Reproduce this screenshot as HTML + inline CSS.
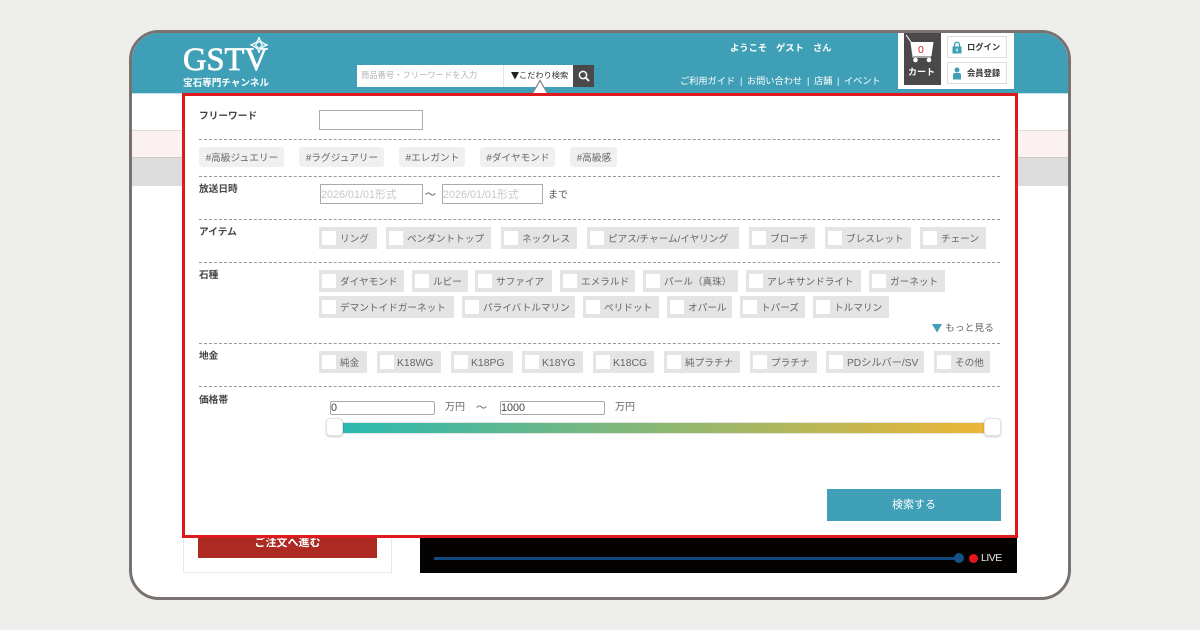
<!DOCTYPE html>
<html lang="ja"><head><meta charset="utf-8"><title>GSTV</title>
<style>
*{box-sizing:border-box;margin:0;padding:0}
html,body{width:1200px;height:630px;overflow:hidden;background:#eeeeec;font-family:"Liberation Sans","Noto Sans CJK JP",sans-serif}
#frame{position:absolute;left:129px;top:30px;width:942px;height:570px;border:3px solid #7a7270;border-radius:30px;background:#fff;overflow:hidden}
.a{position:absolute;white-space:nowrap}
.l{font-size:9.7px;font-weight:700;color:#444;line-height:14px}
.d{position:absolute;left:199px;width:801px;height:0;border-top:1px dashed #999}
.t{position:absolute;height:20px;top:147px;background:#f0f0f0;border-radius:3px;font-size:9.7px;color:#666;line-height:23px;text-align:center;white-space:nowrap;padding-left:1px}
.c{position:absolute;height:22px;background:#e4e4e4;font-size:9.65px;color:#666;line-height:26px;padding-left:21px;white-space:nowrap}
.c:before{content:"";position:absolute;left:3px;top:4px;width:14px;height:14px;background:#fff}
.k{font-size:10.4px;padding-left:20px}
.i{position:absolute;border:1px solid #aaa;background:#fff;font-size:10.8px;color:#c8c8c8;white-space:nowrap;padding-left:0}
.w{color:#fff}
.n{font-size:9.2px;line-height:14px;top:74px}
</style></head><body>
<div id="frame"></div>
<div style="position:absolute;left:0;top:0;width:1200px;height:630px;">
<!-- clipped header -->
<div class="a" style="left:132px;top:33px;width:936px;height:60px;background:#3f9fb7;border-radius:27px 27px 0 0"></div>
<div class="a" style="left:132px;top:93px;width:936px;height:1px;background:#c5e2ea"></div>
<!-- bands -->
<div class="a" style="left:132px;top:130px;width:936px;height:27px;background:#fbf1f1;border-top:1px solid #ddd"></div>
<div class="a" style="left:132px;top:157px;width:936px;height:29px;background:#dcdcdc;border-top:1px solid #ccc"></div>
<!-- logo -->
<div class="a w" style="left:183px;top:40px;font-family:'Liberation Serif',serif;font-size:32.5px;line-height:40px;font-weight:400;-webkit-text-stroke:.75px #fff">GSTV</div>
<svg class="a" style="left:249px;top:36px" width="20" height="20" viewBox="0 0 20 20"><path d="M10 1 C10.700 5 12 6.500 18 9 C12 11.500 10.700 13 10 17 C9.300 13 8 11.500 2 9 C8 6.500 9.300 5 10 1Z" fill="#3f9fb7" stroke="#fff" stroke-width="1.300"/><path d="M10 5.400 L13.600 9 L10 12.600 L6.400 9Z" fill="#3f9fb7" stroke="#fff" stroke-width="1.100"/></svg>
<div class="a w" style="left:183px;top:77px;font-size:9.600px;font-weight:700;line-height:13px">宝石専門チャンネル</div>
<!-- search -->
<div class="a" style="left:357px;top:65px;width:216px;height:22px;background:#fff"></div>
<div class="a" style="left:503px;top:65px;width:1px;height:22px;background:#e4e4e4"></div>
<div class="a" style="left:361px;top:69px;font-size:8.300px;color:#b5b5b5;line-height:13px">商品番号・フリーワードを入力</div>
<svg class="a" style="left:511px;top:72px" width="8" height="8" viewBox="0 0 8 8"><path d="M0 0 H8 L4 7.500Z" fill="#222"/></svg>
<div class="a" style="left:519px;top:69px;font-size:8.200px;color:#333;line-height:13px">こだわり検索</div>
<div class="a" style="left:573px;top:65px;width:21px;height:22px;background:#4a4848"></div>
<svg class="a" style="left:577px;top:69px" width="14" height="14" viewBox="0 0 14 14"><circle cx="6" cy="6" r="3.600" fill="none" stroke="#fff" stroke-width="1.500"/><path d="M8.700 8.700 L12 12" stroke="#fff" stroke-width="1.800"/></svg>
<svg class="a" style="left:530px;top:79px" width="20" height="16" viewBox="0 0 20 16"><path d="M1.500 16 L10 1.500 L18.500 16Z" fill="#fff" stroke="#8a8a8a" stroke-width="1.300"/></svg>
<!-- nav -->
<div class="a w" style="left:730px;top:41px;font-size:9.300px;font-weight:700;line-height:14px">ようこそ</div>
<div class="a w" style="left:776px;top:41px;font-size:9.300px;font-weight:700;line-height:14px">ゲスト</div>
<div class="a w" style="left:813px;top:41px;font-size:9.300px;font-weight:700;line-height:14px">さん</div>
<div class="a w n" style="left:680px">ご利用ガイド</div>
<div class="a w n" style="left:740px">|</div>
<div class="a w n" style="left:747px">お問い合わせ</div>
<div class="a w n" style="left:807px">|</div>
<div class="a w n" style="left:814px">店舗</div>
<div class="a w n" style="left:837px">|</div>
<div class="a w n" style="left:844px">イベント</div>
<!-- cart -->
<div class="a" style="left:898px;top:33px;width:116px;height:56px;background:#fff"></div>
<div class="a" style="left:904px;top:33px;width:37px;height:52px;background:#4a4848"></div>
<svg class="a" style="left:904px;top:34px" width="37" height="30" viewBox="0 0 37 30"><path d="M2 1 L7 8 L9 23 H27" fill="none" stroke="#ddd" stroke-width="1.200"/><path d="M6.500 8 H29.500 L27.500 22 H9Z" fill="#fff"/><circle cx="11.500" cy="26" r="2.300" fill="#fff"/><circle cx="25" cy="26" r="2.300" fill="#fff"/></svg>
<div class="a" style="left:918px;top:44px;font-size:10.500px;color:#c22;line-height:13px">0</div>
<div class="a w" style="left:908px;top:65px;font-size:9px;font-weight:700;line-height:14px">カート</div>
<div class="a" style="left:947px;top:36px;width:60px;height:22px;border:1px solid #ddd;background:#fff"></div>
<div class="a" style="left:947px;top:62px;width:60px;height:22px;border:1px solid #ddd;background:#fff"></div>
<svg class="a" style="left:951px;top:41px" width="12" height="13" viewBox="0 0 12 13"><path d="M3.500 6 V3.800 A2.500 2.500 0 0 1 8.500 3.800 V6" fill="none" stroke="#3f9fb7" stroke-width="1.300"/><rect x="1.500" y="5.500" width="9" height="7" fill="#3f9fb7"/><rect x="5.300" y="7.500" width="1.400" height="3" fill="#fff"/></svg>
<svg class="a" style="left:951px;top:67px" width="12" height="13" viewBox="0 0 12 13"><circle cx="6" cy="3" r="2.500" fill="#3f9fb7"/><path d="M2 12.500 V8 Q2 6 4 6 H8 Q10 6 10 8 V12.500Z" fill="#3f9fb7"/></svg>
<div class="a" style="left:967px;top:40px;font-size:8.300px;font-weight:700;color:#333;line-height:14px">ログイン</div>
<div class="a" style="left:967px;top:66px;font-size:8.300px;font-weight:700;color:#333;line-height:14px">会員登録</div>
<!-- bottom -->
<div class="a" style="left:183px;top:530px;width:209px;height:43px;border:1px solid #e8e8e8;background:#fff"></div>
<div class="a" style="left:198px;top:530px;width:179px;height:28px;background:#ac2a22;color:#fff;font-size:11px;font-weight:700;text-align:center;line-height:24px;padding-top:1px">ご注文へ進む</div>
<div class="a" style="left:420px;top:530px;width:597px;height:43px;background:#050202"></div>
<div class="a" style="left:434px;top:557px;width:525px;height:3px;background:#134a7e"></div>
<div class="a" style="left:954px;top:553px;width:10px;height:10px;border-radius:50%;background:#14528a"></div>
<div class="a" style="left:969px;top:554px;width:9px;height:9px;border-radius:50%;background:#e8141c"></div>
<div class="a" style="left:981px;top:552px;font-size:10.500px;color:#e8e8e8;line-height:13px;letter-spacing:-.5px">LIVE</div>
<!-- modal -->
<div class="a" style="left:182px;top:93px;width:836px;height:445px;background:#fff;border:3px solid #dc1a1f;outline:0"></div>
<div class="a l" style="left:199px;top:110px">フリーワード</div>
<div class="i" style="left:319px;top:110px;width:104px;height:20px"></div>
<div class="d" style="top:139px"></div>
<div class="t" style="left:199px;width:85px">#高級ジュエリー</div>
<div class="t" style="left:299px;width:85px">#ラグジュアリー</div>
<div class="t" style="left:399px;width:66px">#エレガント</div>
<div class="t" style="left:480px;width:75px">#ダイヤモンド</div>
<div class="t" style="left:570px;width:47px">#高級感</div>
<div class="d" style="top:176px"></div>
<div class="a l" style="left:199px;top:183px">放送日時</div>
<div class="i" style="left:320px;top:184px;width:103px;height:20px;line-height:20px">2026/01/01形式</div>
<div class="a" style="left:425px;top:188px;font-size:11px;color:#555;line-height:15px">～</div>
<div class="i" style="left:442px;top:184px;width:101px;height:20px;line-height:20px">2026/01/01形式</div>
<div class="a" style="left:548px;top:189px;font-size:10px;color:#555;line-height:14px">まで</div>
<div class="d" style="top:219px"></div>
<div class="a l" style="left:199px;top:226px">アイテム</div>
<div class="c" style="left:319px;top:227px;width:58px">リング</div>
<div class="c" style="left:386px;top:227px;width:105px">ペンダントトップ</div>
<div class="c" style="left:501px;top:227px;width:76px">ネックレス</div>
<div class="c" style="left:587px;top:227px;width:152px">ピアス/チャーム/イヤリング</div>
<div class="c" style="left:749px;top:227px;width:66px">ブローチ</div>
<div class="c" style="left:825px;top:227px;width:86px">ブレスレット</div>
<div class="c" style="left:920px;top:227px;width:66px">チェーン</div>
<div class="d" style="top:262px"></div>
<div class="a l" style="left:199px;top:269px">石種</div>
<div class="c" style="left:319px;top:270px;width:85px">ダイヤモンド</div>
<div class="c" style="left:412px;top:270px;width:56px">ルビー</div>
<div class="c" style="left:475px;top:270px;width:77px">サファイア</div>
<div class="c" style="left:560px;top:270px;width:75px">エメラルド</div>
<div class="c" style="left:643px;top:270px;width:95px">パール（真珠）</div>
<div class="c" style="left:746px;top:270px;width:115px">アレキサンドライト</div>
<div class="c" style="left:869px;top:270px;width:76px">ガーネット</div>
<div class="c" style="left:319px;top:296px;width:135px">デマントイドガーネット</div>
<div class="c" style="left:462px;top:296px;width:113px">パライバトルマリン</div>
<div class="c" style="left:583px;top:296px;width:76px">ペリドット</div>
<div class="c" style="left:667px;top:296px;width:65px">オパール</div>
<div class="c" style="left:740px;top:296px;width:65px">トパーズ</div>
<div class="c" style="left:813px;top:296px;width:76px">トルマリン</div>
<svg class="a" style="left:932px;top:324px" width="10" height="9" viewBox="0 0 10 9"><path d="M0 0 H10 L5 8.500Z" fill="#3f9fb7"/></svg>
<div class="a" style="left:945px;top:322px;font-size:9.800px;color:#666;line-height:14px">もっと見る</div>
<div class="d" style="top:343px"></div>
<div class="a l" style="left:199px;top:350px">地金</div>
<div class="c" style="left:319px;top:351px;width:48px">純金</div>
<div class="c k" style="left:377px;top:351px;width:64px">K18WG</div>
<div class="c k" style="left:451px;top:351px;width:62px">K18PG</div>
<div class="c k" style="left:522px;top:351px;width:61px">K18YG</div>
<div class="c k" style="left:593px;top:351px;width:61px">K18CG</div>
<div class="c" style="left:664px;top:351px;width:76px">純プラチナ</div>
<div class="c" style="left:750px;top:351px;width:67px">プラチナ</div>
<div class="c" style="left:826px;top:351px;width:98px;font-size:10.200px">PDシルバー/SV</div>
<div class="c" style="left:934px;top:351px;width:56px">その他</div>
<div class="d" style="top:386px"></div>
<div class="a l" style="left:199px;top:394px">価格帯</div>
<div class="i" style="left:330px;top:401px;width:105px;height:14px;border-radius:2px;color:#444;line-height:13px">0</div>
<div class="a" style="left:445px;top:401px;font-size:10px;color:#666;line-height:14px">万円</div>
<div class="a" style="left:476px;top:401px;font-size:11px;color:#666;line-height:15px">～</div>
<div class="i" style="left:500px;top:401px;width:105px;height:14px;border-radius:2px;color:#444;line-height:13px">1000</div>
<div class="a" style="left:615px;top:401px;font-size:10px;color:#666;line-height:14px">万円</div>
<div class="a" style="left:330px;top:422px;width:666px;height:12px;background:linear-gradient(90deg,#27b9b3,#f0b633);border:1px solid #e4e4e4"></div>
<div class="a" style="left:326px;top:418px;width:17px;height:18px;background:#fff;border:1px solid #e2e2e2;border-radius:4px;box-shadow:0 1px 2px rgba(0,0,0,.2)"></div>
<div class="a" style="left:984px;top:418px;width:17px;height:18px;background:#fff;border:1px solid #e2e2e2;border-radius:4px;box-shadow:0 1px 2px rgba(0,0,0,.2)"></div>
<div class="a w" style="left:827px;top:489px;width:174px;height:32px;background:#40a0b7;font-size:11px;line-height:32px;text-align:center">検索する</div>
</div>
</body></html>
